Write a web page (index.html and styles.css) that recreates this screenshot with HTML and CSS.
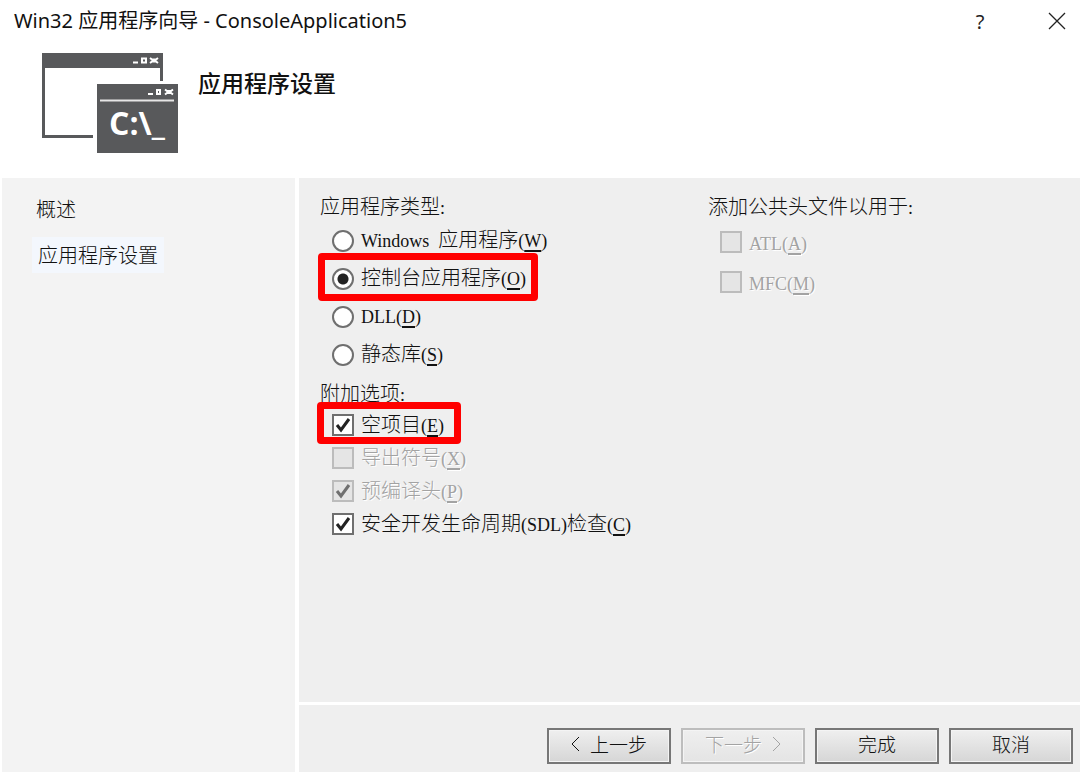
FILE: index.html
```
<!DOCTYPE html>
<html lang="zh-CN">
<head>
  <meta charset="UTF-8" />
  <meta name="viewport" content="width=device-width, initial-scale=1.0" />
  <title>Win32 应用程序向导 - ConsoleApplication5</title>
  <link rel="stylesheet" href="styles.css">
</head>
<body>
  <header class="titlebar">
    <h1 class="title">Win32 应用程序向导 - ConsoleApplication5</h1>
    <button type="button" class="title-btn" aria-label="帮助">?</button>
    <button type="button" class="title-btn" aria-label="关闭">
      <svg width="18" height="18" viewBox="0 0 18 18"><path d="M1 1L17 17M17 1L1 17" stroke="#222" stroke-width="1.3" fill="none"/></svg>
    </button>
  </header>

  <section class="banner">
    <svg class="app-icon" width="137" height="101" viewBox="0 0 137 101">
      <path fill="#58595b" d="M0 0h121v28h-3V15H3v67h48v3H0z"/>
      <path fill="#58595b" d="M55 31h81v69H55z"/>
      <g fill="none" stroke="#fff" stroke-width="2">
        <path d="M91 9.500h5M100 5.500h4v4h-4zM108 5l2 1.500h4l2-1.500M108 10l2-1.500h4l2 1.500"/>
        <path d="M106 41h5M115 37h3v4h-3zM123 36.500l2 1.500h4l2-1.500M123 41.500l2-1.500h4l2 1.500"/>
        <path d="M58 47.500h74" stroke="#e6e6e6"/>
      </g>
      <text class="icon-text" x="67" y="82">C:\_</text>
    </svg>
    <h2>应用程序设置</h2>
  </section>

  <div class="wizard">
    <nav class="sidebar">
      <a href="#overview">概述</a>
      <a href="#settings" class="active">应用程序设置</a>
    </nav>

    <main class="page">
      <form class="settings" id="settings">
        <div class="column">
          <fieldset class="types">
            <legend>应用程序类型<span class="en">:</span></legend>
            <label><input type="radio" name="type"><span><span class="en">Windows  </span>应用程序<span class="en">(<u>W</u>)</span></span></label>
            <label class="marked"><input type="radio" name="type" checked><span>控制台应用程序<span class="en">(<u>O</u>)</span></span></label>
            <label><input type="radio" name="type"><span><span class="en">DLL(<u>D</u>)</span></span></label>
            <label><input type="radio" name="type"><span>静态库<span class="en">(<u>S</u>)</span></span></label>
          </fieldset>
          <fieldset class="extras">
            <legend>附加选项<span class="en">:</span></legend>
            <label class="marked"><input type="checkbox" checked><span>空项目<span class="en">(<u>E</u>)</span></span></label>
            <label class="disabled"><input type="checkbox" disabled><span>导出符号<span class="en">(<u>X</u>)</span></span></label>
            <label class="disabled"><input type="checkbox" checked disabled><span>预编译头<span class="en">(<u>P</u>)</span></span></label>
            <label><input type="checkbox" checked><span>安全开发生命周期<span class="en">(SDL)</span>检查<span class="en">(<u>C</u>)</span></span></label>
          </fieldset>
        </div>
        <div class="column">
          <fieldset class="headers">
            <legend>添加公共头文件以用于<span class="en">:</span></legend>
            <label class="disabled"><input type="checkbox" disabled><span><span class="en">ATL(<u>A</u>)</span></span></label>
            <label class="disabled"><input type="checkbox" disabled><span><span class="en">MFC(<u>M</u>)</span></span></label>
          </fieldset>
        </div>
      </form>

      <footer class="actions">
        <button type="button">
          <svg width="9" height="16" viewBox="0 0 9 16"><path d="M8 1L1 8l7 7"/></svg>
          上一步
        </button>
        <button type="button" disabled>
          下一步
          <svg width="9" height="16" viewBox="0 0 9 16"><path d="M1 1l7 7-7 7"/></svg>
        </button>
        <button type="button">完成</button>
        <button type="button">取消</button>
      </footer>
    </main>
  </div>
</body>
</html>
```
FILE: styles.css
```
* {
  box-sizing: border-box;
}

body {
  margin: 0;
  min-height: 100vh;
  display: flex;
  flex-direction: column;
  background-color: #fff;
  color: #111;
  font-family: "Noto Sans CJK SC", sans-serif;
  font-weight: 300;
  font-size: 20px;
  line-height: 26px;
}

.titlebar {
  display: flex;
  align-items: center;
  height: 42px;
  padding-left: 14px;
}

.title {
  flex: 1;
  margin: 0;
  font-family: "Noto Sans", "Noto Sans CJK SC", sans-serif;
  font-size: 20px;
  font-weight: 400;
}

.title-btn {
  display: flex;
  align-items: center;
  justify-content: center;
  width: 46px;
  height: 42px;
  margin-left: 31px;
  padding: 0;
  border: none;
  background: none;
  color: #222;
  font-family: "Noto Sans", sans-serif;
  font-size: 20px;
}

.banner {
  display: flex;
  align-items: flex-start;
  gap: 19px;
  height: 136px;
  padding: 11px 42px;
}

.banner h2 {
  margin: 16px 0 0;
  font-size: 23px;
  font-weight: 500;
}

.icon-text {
  fill: #fff;
  font-family: "Open Sans", sans-serif;
  font-size: 32px;
  font-weight: 700;
}

.wizard {
  flex: 1;
  display: flex;
  gap: 4px;
  padding: 0 0 1px 2px;
}

.sidebar {
  display: flex;
  flex-direction: column;
  align-items: flex-start;
  gap: 10px;
  width: 293px;
  padding: 13px 30px;
  background-color: #f3f3f3;
}

.sidebar a {
  padding: 5px 6px;
  color: #111;
  text-decoration: none;
}

.sidebar a:first-child {
  padding-left: 4px;
}

.sidebar a.active {
  background-color: #f3f7fd;
}

.page {
  flex: 1;
  display: flex;
  flex-direction: column;
  background-color: #efefef;
}

.settings {
  flex: 1;
  display: grid;
  grid-template-columns: 1fr 1fr;
  column-gap: 16px;
  padding: 15px 0 0 21px;
  border-bottom: 3px solid #fff;
}

.column {
  display: flex;
  flex-direction: column;
  gap: 6px;
}

fieldset {
  min-width: 0;
  margin: 0;
  padding: 0;
  border: none;
}

legend {
  margin-bottom: 3px;
  padding: 0;
}

.extras legend {
  margin-bottom: 2px;
}

.settings label {
  position: relative;
  display: flex;
  align-items: center;
  gap: 7px;
  width: fit-content;
  height: 38px;
  padding-left: 12px;
}

.settings label > span {
  padding-bottom: 4px;
}

.settings .extras label {
  height: 33px;
}

.settings .extras label > span {
  padding-bottom: 2px;
}

.settings .headers label {
  height: 40px;
}

.settings .headers label > span {
  padding-bottom: 0;
}

.en {
  font-family: "Liberation Serif", serif;
  font-size: 18px;
  line-height: 1;
  white-space: pre;
}

u {
  text-decoration-thickness: 2px;
  text-underline-offset: 3px;
}

/* red frame round the recommended options */
.marked::after {
  content: "";
  position: absolute;
  inset: -7px -12px -3px -2px;
  border: 7px solid #f00;
  border-radius: 4px;
  z-index: 1;
}

.extras .marked::after {
  inset: -6px -17px -3px -3px;
}

input {
  appearance: none;
  flex: none;
  width: 22px;
  height: 22px;
  margin: 0;
  border: 2px solid #6f6f6f;
  background: #fff center / 18px 18px no-repeat;
}

input[type="radio"] {
  border-radius: 50%;
}

input[type="radio"]:checked {
  background-image: radial-gradient(circle, #222 5px, transparent 6px);
}

input[type="checkbox"]:checked {
  background-image: url("data:image/svg+xml,%3Csvg xmlns='http://www.w3.org/2000/svg' viewBox='0 0 18 18'%3E%3Cpath d='M3 9l4 5 8-11' fill='none' stroke='%23222' stroke-width='3'/%3E%3C/svg%3E");
}

input:disabled {
  border-color: #bcbcbc;
  background-color: #e5e5e5;
}

input[type="checkbox"]:disabled:checked {
  background-image: url("data:image/svg+xml,%3Csvg xmlns='http://www.w3.org/2000/svg' viewBox='0 0 18 18'%3E%3Cpath d='M3 9l4 5 8-11' fill='none' stroke='%23707070' stroke-width='3'/%3E%3C/svg%3E");
}

.disabled {
  color: #a3a3a3;
  text-shadow: 1px 1px 0 #fff;
}

.actions {
  display: flex;
  justify-content: flex-end;
  gap: 10px;
  height: 67px;
  padding: 23px 7px 0 0;
}

.actions button {
  display: flex;
  align-items: center;
  justify-content: center;
  gap: 10px;
  width: 124px;
  height: 36px;
  padding: 0 0 4px;
  border: 2px solid #777;
  box-shadow: inset 0 0 0 1px #f4f4f4;
  background: linear-gradient(#efefef, #d6d6d6);
  color: #111;
  font: inherit;
  font-size: 19px;
}

.actions button:disabled {
  border-color: #bdbdbd;
  background: linear-gradient(#efefef, #e4e4e4);
  color: #a3a3a3;
  text-shadow: 1px 1px 0 #fff;
}

.actions path {
  fill: none;
  stroke: currentColor;
}
```
